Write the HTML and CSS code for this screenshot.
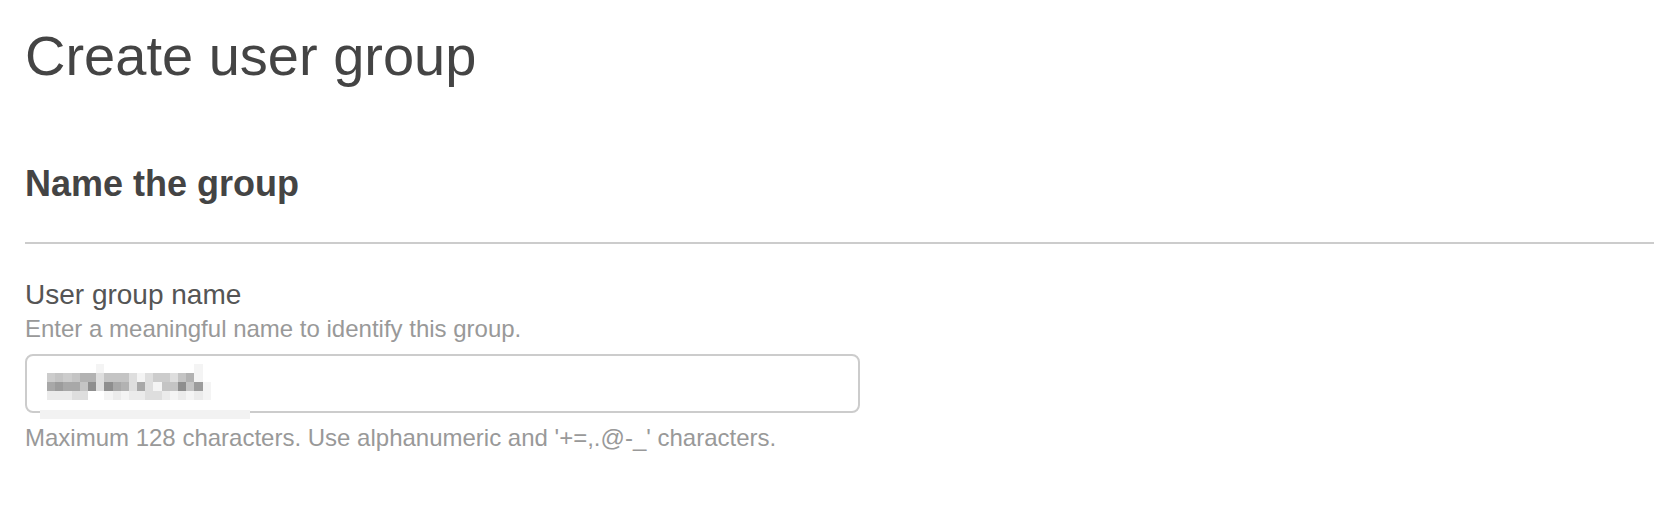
FILE: index.html
```html
<!DOCTYPE html>
<html lang="en">
<head>
<meta charset="utf-8">
<title>Create user group</title>
<link rel="stylesheet" href="styles.css">
</head>
<body>
<main class="page">
  <h1 class="page-title">Create user group</h1>
  <section class="section">
    <h2 class="section-title">Name the group</h2>
    <div class="field">
      <label class="field-label" for="groupName">User group name</label>
      <p class="field-desc">Enter a meaningful name to identify this group.</p>
      <div class="input-wrap">
        <div class="input" id="groupName">
          <div class="redacted">
            <span class="c0"></span><span class="c0"></span><span class="c0"></span><span class="c0"></span><span class="c0"></span><span class="c0"></span><span class="c1"></span><span class="c0"></span><span class="c0"></span><span class="c0"></span><span class="c0"></span><span class="c0"></span><span class="c0"></span><span class="c0"></span><span class="c0"></span><span class="c0"></span><span class="c0"></span><span class="c0"></span><span class="c1"></span><span class="c0"></span><span class="c0"></span>
            <span class="c4"></span><span class="c5"></span><span class="c4"></span><span class="c5"></span><span class="c6"></span><span class="c6"></span><span class="c3"></span><span class="c5"></span><span class="c5"></span><span class="c5"></span><span class="c3"></span><span class="c1"></span><span class="c3"></span><span class="c4"></span><span class="c4"></span><span class="c3"></span><span class="c5"></span><span class="c6"></span><span class="c1"></span><span class="c0"></span><span class="c0"></span>
            <span class="c7"></span><span class="c8"></span><span class="c7"></span><span class="c7"></span><span class="c5"></span><span class="c9"></span><span class="c3"></span><span class="c9"></span><span class="c7"></span><span class="c6"></span><span class="c3"></span><span class="c7"></span><span class="c3"></span><span class="c1"></span><span class="c5"></span><span class="c5"></span><span class="c9"></span><span class="c5"></span><span class="c8"></span><span class="c1"></span><span class="c0"></span>
            <span class="c2"></span><span class="c2"></span><span class="c2"></span><span class="c3"></span><span class="c3"></span><span class="c0"></span><span class="c0"></span><span class="c1"></span><span class="c2"></span><span class="c1"></span><span class="c2"></span><span class="c2"></span><span class="c3"></span><span class="c3"></span><span class="c2"></span><span class="c1"></span><span class="c2"></span><span class="c1"></span><span class="c2"></span><span class="c1"></span><span class="c0"></span>
          </div>
        </div>
        <div class="redact-bar"></div>
      </div>
      <p class="field-hint">Maximum 128 characters. Use alphanumeric and '+=,.@-_' characters.</p>
    </div>
  </section>
</main>
</body>
</html>
```
FILE: styles.css
```css
html, body {
  margin: 0;
  padding: 0;
  background: #ffffff;
}

body {
  font-family: "Liberation Sans", Arial, Helvetica, sans-serif;
  color: #444444;
}

.page {
  padding: 24px 0 0 25px;
}

.page-title {
  margin: 0;
  font-size: 56px;
  line-height: 64px;
  font-weight: 400;
  color: #444444;
}

.section {
  margin-top: 74px;
}

.section-title {
  margin: 0;
  font-size: 36px;
  line-height: 44px;
  font-weight: 700;
  color: #444444;
  padding-bottom: 36px;
  border-bottom: 2px solid #cccccc;
}

.field {
  padding-top: 35px;
}

.field-label {
  display: block;
  font-size: 28px;
  line-height: 32px;
  color: #555555;
}

.field-desc {
  margin: 4px 0 0;
  font-size: 24px;
  line-height: 28px;
  color: #999999;
}

.input-wrap {
  position: relative;
  width: 835px;
  margin-top: 11px;
}

.input {
  box-sizing: border-box;
  height: 59px;
  border: 2px solid #cccccc;
  border-radius: 8px;
  background: #ffffff;
  padding: 8px 0 0 20px;
}

.redacted {
  display: grid;
  grid-template-columns: repeat(21, 8.2px);
  grid-auto-rows: 9px;
}

.redact-bar {
  position: absolute;
  left: 15px;
  top: 56px;
  width: 210px;
  height: 9px;
  background: #f2f2f2;
}

.c0 { background: #ffffff; }
.c1 { background: #f4f4f4; }
.c2 { background: #ebebeb; }
.c3 { background: #dedede; }
.c4 { background: #cccccc; }
.c5 { background: #c4c4c4; }
.c6 { background: #b2b2b2; }
.c7 { background: #a8a8a8; }
.c8 { background: #9c9c9c; }
.c9 { background: #8e8e8e; }

.field-hint {
  margin: 11px 0 0;
  font-size: 24px;
  line-height: 28px;
  color: #999999;
}
```
